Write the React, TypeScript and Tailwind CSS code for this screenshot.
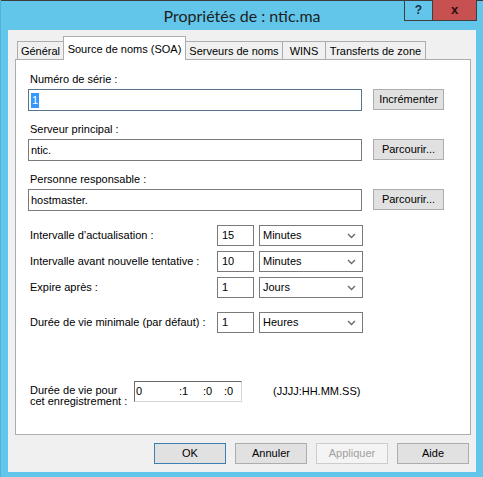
import React from 'react';

const Chevron = () => (
  <svg width="9" height="6" viewBox="0 0 9 6" className="shrink-0">
    <path d="M1 1 L4.5 4.5 L8 1" fill="none" stroke="#6b6b6b" strokeWidth="1.4" />
  </svg>
);

interface BtnProps {
  label: string;
  primary?: boolean;
  disabled?: boolean;
  width: string;
}

const Btn = ({ label, primary, disabled, width }: BtnProps) => {
  let tone = 'bg-[#e1e1e1] border-[#adadad] text-black';
  if (primary) tone = 'bg-[#e1e1e1] border-[#3c7fb1] text-black';
  if (disabled) tone = 'bg-[#f4f4f4] border-[#cccccc] text-[#a0a0a0]';
  return (
    <div className={`${width} h-[21px] shrink-0 flex items-center justify-center border ${tone}`}>
      {label}
    </div>
  );
};

const Tab = ({ label, width, active }: { label: string; width: string; active?: boolean }) =>
  active ? (
    <div className={`${width} h-[24px] -ml-px -mb-px relative z-10 flex items-start justify-center pt-[4px] bg-white border border-b-0 border-[#adadad]`}>
      {label}
    </div>
  ) : (
    <div className={`${width} h-[18px] -ml-px flex items-center justify-center pt-px bg-[#f0f0f0] border border-b-0 border-[#adadad] first:ml-0`}>
      {label}
    </div>
  );

const TextRow = ({ label, value, button, focused }: { label: string; value: React.ReactNode; button: string; focused?: boolean }) => (
  <div className="flex flex-col">
    <div className="h-[16px] leading-[13px] pl-[2px]">{label}</div>
    <div className="flex items-start gap-[11px]">
      <div className={`w-[334px] h-[22px] bg-white border flex items-center pl-[2px] ${focused ? 'border-[#56748d]' : 'border-[#7a7a7a]'}`}>
        {value}
      </div>
      <Btn label={button} width="w-[71px]" />
    </div>
  </div>
);

const IntervalRow = ({ label, value, unit, className }: { label: string; value: string; unit: string; className?: string }) => (
  <div className={`flex items-center h-[21px] ${className ?? ''}`}>
    <div className="w-[189px] pl-[2px]">{label}</div>
    <div className="w-[37px] h-[21px] bg-white border border-[#7a7a7a] flex items-center pl-[4px]">{value}</div>
    <div className="w-[104px] h-[21px] ml-[5px] bg-white border border-[#7a7a7a] flex items-center justify-between pl-[3px] pr-[6px]">
      <span>{unit}</span>
      <Chevron />
    </div>
  </div>
);

export default function App() {
  return (
    <div
      className="w-[483px] h-[477px] bg-[#62c6ea] flex flex-col overflow-hidden text-[11px] text-black border-l border-[#4fb4d8]"
      style={{ fontFamily: '"Liberation Sans", Arial, sans-serif' }}
    >
      {/* title bar */}
      <div className="h-[30px] shrink-0 relative flex items-center justify-center">
        <div className="absolute top-0 left-0 right-0 h-px bg-[#3d3d3d]" />
        <span className="text-[16px] text-[#1e1e1e] pt-[1px]" style={{ fontFamily: 'Lato, "Noto Sans", sans-serif' }}>
          Propriétés de : ntic.ma
        </span>
        <div className="absolute top-0 right-[6px] flex">
          <div className="w-[29px] h-[21px] border border-t-0 border-[#3f3f3f] flex items-center justify-center text-[#1b2f4d] font-bold text-[12px]">
            ?
          </div>
          <div className="w-[44px] h-[21px] bg-[#c75050] border border-t-0 border-l-0 border-[#3f3f3f] flex items-center justify-center text-[#2b1111] font-bold text-[13px]">
            x
          </div>
        </div>
      </div>

      {/* client area */}
      <div className="flex-1 ml-[7px] mr-[7px] mb-[5px] bg-[#f0f0f0] flex flex-col pt-[6px] pl-[7px] pr-[5px] pb-[8px]">
        <div className="h-[23px] flex items-end pl-[2px]">
          <Tab label="Général" width="w-[47px]" />
          <Tab label="Source de noms (SOA)" width="w-[123px]" active />
          <Tab label="Serveurs de noms" width="w-[98px]" />
          <Tab label="WINS" width="w-[44px]" />
          <Tab label="Transferts de zone" width="w-[101px]" />
        </div>

        <div className="h-[376px] bg-white border border-[#adadad] flex flex-col pl-[12px] pt-[13px]">
          <TextRow
            label="Numéro de série :"
            focused
            value={<span className="bg-[#3399ff] text-white px-[1px] leading-[15px]">1</span>}
            button="Incrémenter"
          />
          <div className="mt-[12px]">
            <TextRow label="Serveur principal :" value="ntic." button="Parcourir..." />
          </div>
          <div className="mt-[12px]">
            <TextRow label="Personne responsable :" value="hostmaster." button="Parcourir..." />
          </div>

          <IntervalRow className="mt-[14px]" label="Intervalle d’actualisation :" value="15" unit="Minutes" />
          <IntervalRow className="mt-[5px]" label="Intervalle avant nouvelle tentative :" value="10" unit="Minutes" />
          <IntervalRow className="mt-[5px]" label="Expire après :" value="1" unit="Jours" />
          <IntervalRow className="mt-[14px]" label="Durée de vie minimale (par défaut) :" value="1" unit="Heures" />

          <div className="mt-[48px] flex items-center h-[21px]">
            <div className="w-[106px] pl-[2px] leading-[11px] pt-[8px]">
              Durée de vie pour
              <br />
              cet enregistrement :
            </div>
            <div className="w-[108px] h-[21px] bg-white border border-t-[#6a6a6a] border-l-[#6a6a6a] border-r-[#d4d4d4] border-b-[#d4d4d4] flex items-center pl-[1px]">
              <span className="w-[43px]">0</span>
              <span className="w-[24px]">:1</span>
              <span className="w-[21px]">:0</span>
              <span>:0</span>
            </div>
            <div className="ml-[31px]">(JJJJ:HH.MM.SS)</div>
          </div>
        </div>

        <div className="mt-[8px] flex justify-end gap-[9px] pr-[2px]">
          <Btn label="OK" primary width="w-[72px]" />
          <Btn label="Annuler" width="w-[72px]" />
          <Btn label="Appliquer" disabled width="w-[72px]" />
          <Btn label="Aide" width="w-[72px]" />
        </div>
      </div>
    </div>
  );
}
